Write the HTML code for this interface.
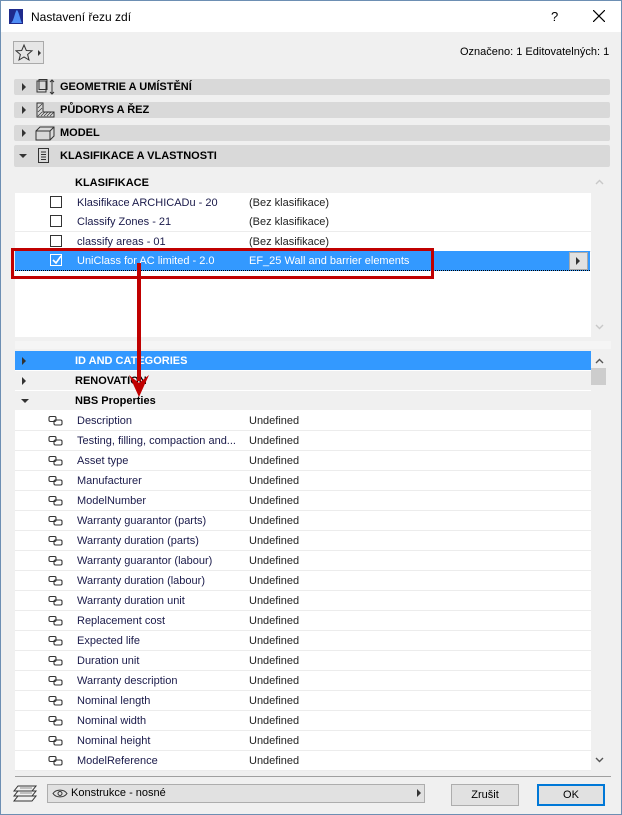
<!DOCTYPE html>
<html><head><meta charset="utf-8"><style>
*{box-sizing:border-box;margin:0;padding:0}
body{width:622px;height:815px;overflow:hidden;font-family:"Liberation Sans",sans-serif;font-size:11px;color:#000;background:#f0f0f0;position:relative}
.win{position:absolute;left:0;top:0;width:622px;height:815px;border:1px solid #6d8fb3;background:#f0f0f0}
.title{position:absolute;left:0;top:0;width:620px;height:31px;background:#fff}
.abs{position:absolute}
.bar{position:absolute;left:13px;width:596px;background:#d9d9d9;border-radius:2px;font-weight:bold;font-size:11px}
.bar span{position:absolute;left:46px}
.tri{position:absolute;width:0;height:0;border-top:4px solid transparent;border-bottom:4px solid transparent;border-left:4px solid #333}
.trid{position:absolute;width:0;height:0;border-left:4px solid transparent;border-right:4px solid transparent;border-top:4px solid #333}
.row{position:absolute;left:14px;width:576px;height:20px;background:#fff;border-bottom:1px solid #ececec;color:#1a1a4a}
.row .n{position:absolute;left:62px;top:4px;white-space:nowrap}
.row .v{position:absolute;left:234px;top:4px;color:#222}
.cb{position:absolute;left:35px;top:3px;width:12px;height:12px;border:1px solid #333;background:#fff}
.lk{position:absolute;left:33px;top:5px}
</style></head><body><div class="win">
<div class="title">
<svg class="abs" style="left:8px;top:8px" width="14" height="15"><rect width="14" height="15" fill="#1e2a8c"/><path d="M2 14 C5 12 6 2 8 1 C10 3 11 10 13 14Z" fill="#4e8df5"/></svg>
<div class="abs" style="left:30px;top:9px;font-size:12px">Nastavení řezu zdí</div>
<div class="abs" style="left:550px;top:8px;font-size:13px">?</div>
<svg class="abs" style="left:592px;top:9px" width="12" height="12"><path d="M0 0L12 12M12 0L0 12" stroke="#000" stroke-width="1.2"/></svg>
</div>
<div class="abs" style="left:12px;top:40px;width:31px;height:23px;border:1px solid #aaa;background:#e6e6e6"></div>
<svg class="abs" style="left:14px;top:42px" width="28" height="20"><path d="M9 2 L11.3 7.5 L17 7.8 L12.6 11.5 L14 17 L9 14 L4 17 L5.4 11.5 L1 7.8 L6.7 7.5Z" fill="none" stroke="#333"/><path d="M23 7 L26 10 L23 13Z" fill="#333"/></svg>
<div class="abs" style="left:459px;top:45px;font-size:11px">Označeno: 1 Editovatelných: 1</div>

<div class="bar" style="top:78px;height:16px"><div class="tri" style="left:8px;top:4px"></div>
<svg class="abs" style="left:21px;top:0" width="22" height="16"><rect x="2" y="2" width="9" height="11" fill="none" stroke="#333"/><rect x="4" y="0.5" width="8" height="10" fill="none" stroke="#333"/><path d="M17 1v14M15 3l2-2 2 2M15 13l2 2 2-2" stroke="#333" fill="none"/></svg><span style="top:2px">GEOMETRIE A UMÍSTĚNÍ</span></div>
<div class="bar" style="top:101px;height:16px"><div class="tri" style="left:8px;top:4px"></div>
<svg class="abs" style="left:21px;top:0" width="22" height="16"><path d="M2 1v14h17v-5h-11v-9z" fill="none" stroke="#333"/><path d="M3 14l4-4M6 14l4-4M9 14l4-4M12 14l4-4M15 14l4-4M3 10l4-4M3 6l4-4" stroke="#333" stroke-width=".7"/></svg><span style="top:2px">PŮDORYS A ŘEZ</span></div>
<div class="bar" style="top:124px;height:16px"><div class="tri" style="left:8px;top:4px"></div>
<svg class="abs" style="left:21px;top:0" width="22" height="16"><path d="M1 6h14v9h-14zM1 6l4-4h14v9l-4 4M15 6l4-4" fill="none" stroke="#333"/></svg><span style="top:2px">MODEL</span></div>
<div class="bar" style="top:144px;height:22px"><div class="trid" style="left:5px;top:9px"></div>
<svg class="abs" style="left:23px;top:3px" width="14" height="16"><rect x="1.5" y=".5" width="10" height="14" fill="none" stroke="#333"/><path d="M4 4h5M4 6.5h5M4 9h5M4 11.5h5" stroke="#333"/></svg><span style="top:5px">KLASIFIKACE A VLASTNOSTI</span></div>

<div class="abs" style="left:14px;top:170px;width:576px;height:166px;background:#fff"></div>
<div class="abs" style="left:14px;top:170px;width:576px;height:22px;background:#f0f0f0"></div>
<div class="abs" style="left:74px;top:176px;font-weight:bold">KLASIFIKACE</div>
<svg class="abs" style="left:594px;top:178px" width="9" height="6"><path d="M1 5l3.5-3.5L8 5" stroke="#c8c8c8" stroke-width="1.4" fill="none"/></svg>
<svg class="abs" style="left:594px;top:323px" width="9" height="6"><path d="M1 1l3.5 3.5L8 1" stroke="#c8c8c8" stroke-width="1.4" fill="none"/></svg>
<div class="row" style="top:192px"><div class="cb"></div><div class="n">Klasifikace ARCHICADu - 20</div><div class="v">(Bez klasifikace)</div></div>
<div class="row" style="top:211px"><div class="cb"></div><div class="n">Classify Zones - 21</div><div class="v">(Bez klasifikace)</div></div>
<div class="row" style="top:231px"><div class="cb"></div><div class="n">classify areas - 01</div><div class="v">(Bez klasifikace)</div></div>
<div class="row" style="top:250px;background:#3399ff;color:#fff;height:20px;border-bottom:1px dotted #000;width:575px"><div class="cb" style="border-color:#fff;background:#3399ff"></div>
<svg class="abs" style="left:36px;top:4px" width="11" height="11"><path d="M2 5l3 3 5-7" stroke="#fff" stroke-width="1.6" fill="none"/></svg>
<div class="n">UniClass for AC limited - 2.0</div><div class="v" style="color:#fff">EF_25 Wall and barrier elements</div>
<div class="abs" style="left:554px;top:1px;width:19px;height:18px;background:#e1e1e1;border:1px solid #aaa"></div><div class="tri" style="left:561px;top:6px"></div></div>
<div class="abs" style="left:10px;top:247px;width:423px;height:31px;border:3px solid #c00000"></div>

<div class="abs" style="left:14px;top:340px;width:596px;height:8px;background:#f5f5f5"></div>
<div class="abs" style="left:14px;top:350px;width:576px;height:420px;background:#fff"></div>
<div class="abs" style="left:14px;top:350px;width:576px;height:19px;background:#3399ff"></div>
<div class="tri" style="left:21px;top:356px"></div>
<div class="abs" style="left:74px;top:354px;font-weight:bold;color:#fff">ID AND CATEGORIES</div>
<div class="abs" style="left:14px;top:370px;width:576px;height:19px;background:#f0f0f0"></div>
<div class="tri" style="left:21px;top:376px"></div>
<div class="abs" style="left:74px;top:374px;font-weight:bold">RENOVATION</div>
<div class="abs" style="left:14px;top:390px;width:576px;height:19px;background:#f0f0f0"></div>
<div class="trid" style="left:20px;top:398px"></div>
<div class="abs" style="left:74px;top:394px;font-weight:bold">NBS Properties</div>
<svg class="abs" style="left:594px;top:357px" width="9" height="6"><path d="M1 5l3.5-3.5L8 5" stroke="#555" stroke-width="1.4" fill="none"/></svg>
<div class="abs" style="left:590px;top:367px;width:15px;height:17px;background:#cdcdcd"></div>
<svg class="abs" style="left:594px;top:756px" width="9" height="6"><path d="M1 1l3.5 3.5L8 1" stroke="#555" stroke-width="1.4" fill="none"/></svg>

<div id="rows"></div>
<svg class="abs" style="left:125px;top:262px" width="26" height="136"><path d="M13 0v118" stroke="#c00000" stroke-width="4"/><path d="M3 112L13 134 23 112 13 120Z" fill="#c00000"/></svg>

<div class="abs" style="left:14px;top:775px;width:596px;height:1px;background:#a0a0a0"></div>
<svg class="abs" style="left:11px;top:784px" width="26" height="18"><path d="M6 1h18l-4 5h-18zM6 6h18l-4 5h-18zM6 11h18l-4 5h-18z" fill="#f0f0f0" stroke="#333"/><path d="M8 3h12M8 8h12" stroke="#333" stroke-width=".6"/></svg>
<div class="abs" style="left:46px;top:783px;width:378px;height:19px;background:#e1e1e1;border:1px solid #adadad"></div>
<svg class="abs" style="left:51px;top:787px" width="16" height="11"><path d="M1 5.5C4 1 12 1 15 5.5 12 10 4 10 1 5.5Z" fill="none" stroke="#333"/><circle cx="8" cy="5.5" r="2" fill="none" stroke="#333"/></svg>
<div class="abs" style="left:70px;top:786px">Konstrukce - nosné</div>
<div class="tri" style="left:416px;top:788px"></div>
<div class="abs" style="left:450px;top:783px;width:68px;height:22px;background:#e1e1e1;border:1px solid #adadad;text-align:center;line-height:20px">Zrušit</div>
<div class="abs" style="left:536px;top:783px;width:68px;height:22px;background:#e1e1e1;border:2px solid #0078d7;text-align:center;line-height:18px">OK</div>
</div>
<script>
var d=["Description","Testing, filling, compaction and...","Asset type","Manufacturer","ModelNumber","Warranty guarantor (parts)","Warranty duration (parts)","Warranty guarantor (labour)","Warranty duration (labour)","Warranty duration unit","Replacement cost","Expected life","Duration unit","Warranty description","Nominal length","Nominal width","Nominal height","ModelReference"],h="";
d.forEach(function(t,i){h+='<div class="row" style="top:'+(410+i*20)+'px"><svg class="lk" width="16" height="10"><rect x="1" y=".5" width="7" height="5" rx="1.5" fill="none" stroke="#333" stroke-width="1.1"/><rect x="6" y="4" width="8" height="5" rx="1.5" fill="none" stroke="#333" stroke-width="1.1"/></svg><div class="n">'+t+'</div><div class="v">Undefined</div></div>'});
document.getElementById("rows").innerHTML=h;
</script>
</body></html>
